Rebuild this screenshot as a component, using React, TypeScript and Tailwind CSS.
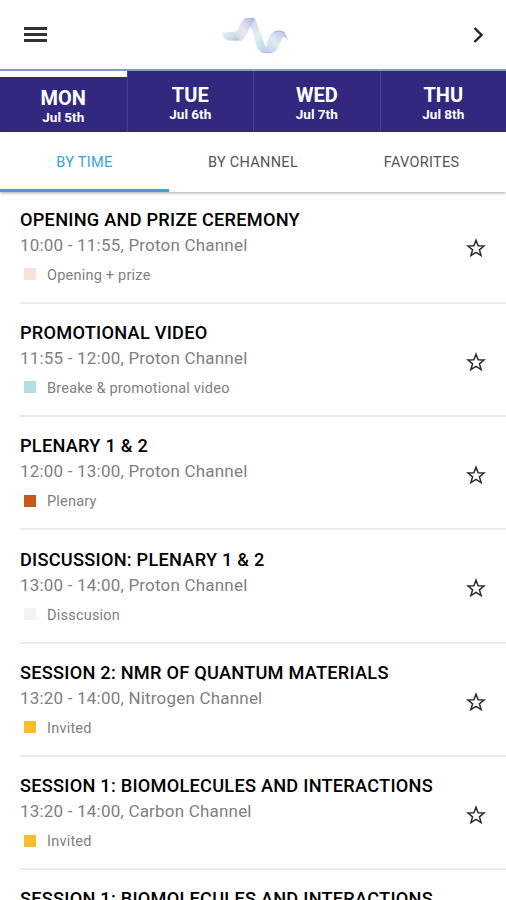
import { useState } from "react";

type Session = {
  id: number;
  title: string;
  time: string;
  channel: string;
  category: string;
  color: string;
};

const days = [
  { name: "MON", date: "Jul 5th" },
  { name: "TUE", date: "Jul 6th" },
  { name: "WED", date: "Jul 7th" },
  { name: "THU", date: "Jul 8th" },
];

const filters = ["BY TIME", "BY CHANNEL", "FAVORITES"];

const sessions: Session[] = [
  { id: 1, title: "OPENING AND PRIZE CEREMONY", time: "10:00 - 11:55", channel: "Proton Channel", category: "Opening + prize", color: "bg-[#fae1d6]" },
  { id: 2, title: "PROMOTIONAL VIDEO", time: "11:55 - 12:00", channel: "Proton Channel", category: "Breake & promotional video", color: "bg-[#b3dce6]" },
  { id: 3, title: "PLENARY 1 & 2", time: "12:00 - 13:00", channel: "Proton Channel", category: "Plenary", color: "bg-[#c65a1e]" },
  { id: 4, title: "DISCUSSION: PLENARY 1 & 2", time: "13:00 - 14:00", channel: "Proton Channel", category: "Disscusion", color: "bg-[#f3f3f3]" },
  { id: 5, title: "SESSION 2: NMR OF QUANTUM MATERIALS", time: "13:20 - 14:00", channel: "Nitrogen Channel", category: "Invited", color: "bg-[#fbbd2b]" },
  { id: 6, title: "SESSION 1: BIOMOLECULES AND INTERACTIONS", time: "13:20 - 14:00", channel: "Carbon Channel", category: "Invited", color: "bg-[#fbbd2b]" },
  { id: 7, title: "SESSION 1: BIOMOLECULES AND INTERACTIONS", time: "13:40 - 14:00", channel: "Carbon Channel", category: "Invited", color: "bg-[#fbbd2b]" },
];

function WaveLogo() {
  return (
    <svg className="opacity-90" width="68" height="40" viewBox="0 0 68 40" fill="none">
      <defs>
        <linearGradient id="tail" x1="0" y1="0" x2="1" y2="0.6">
          <stop offset="0" stopColor="#eaf5f8" />
          <stop offset="0.5" stopColor="#cfe3ec" />
          <stop offset="1" stopColor="#a9c3dc" />
        </linearGradient>
        <linearGradient id="rise" x1="0" y1="1" x2="0.9" y2="0">
          <stop offset="0" stopColor="#c3d8e8" />
          <stop offset="0.45" stopColor="#ebe5f2" />
          <stop offset="1" stopColor="#a9b4da" />
        </linearGradient>
        <linearGradient id="fall" x1="0" y1="0" x2="0.7" y2="1">
          <stop offset="0" stopColor="#c9cde8" />
          <stop offset="0.5" stopColor="#dceff6" />
          <stop offset="1" stopColor="#b5cce6" />
        </linearGradient>
        <linearGradient id="end" x1="0" y1="1" x2="0.8" y2="0">
          <stop offset="0" stopColor="#b5c9e4" />
          <stop offset="0.5" stopColor="#dcebf5" />
          <stop offset="1" stopColor="#b4c0e1" />
        </linearGradient>
      </defs>
      <path d="M1 17C6 17.5 12 17 17 16L21 25C18 26 12 26 8 25.5C4 25 1 21 1 17Z" fill="url(#tail)" />
      <path d="M30 4C32 1.5 34 3 35 6C37 11 39 16 41 22C43 29 46 36 51 37.5C46 38.5 42 38 39 36C33 30 34 18 29 11Z" fill="url(#fall)" />
      <path d="M15 18C19 12 19 3 28 3C31 2.8 33 3 34 4.5C29 9 27 21 20 26C17 25 15 21 15 18Z" fill="url(#rise)" />
      <path d="M45 36C46 28 47 17 55 16C63 14.5 66 19 67 26C65 23 64 22 62 22C59 27 57 36 52 37.5C48 38.5 46 38 45 36Z" fill="url(#end)" />
      <path d="M24 4.2Q29 2.5 33 3.8M40 36.5Q45 38.5 51 37.5M53 17Q59 14.8 64 17.5" stroke="#9cb0d8" strokeWidth="0.9" />
    </svg>
  );
}

function SessionRow({ session }: { session: Session }) {
  return (
    <li className="ml-5 flex h-[113.3px] shrink-0 items-start justify-between border-b-2 border-[#ebebeb] pt-[17.2px]">
      <div>
        <h2 className="text-[18.2px] leading-6 font-medium tracking-[0.24px] whitespace-nowrap text-black">{session.title}</h2>
        <p className="text-[17px] leading-[26px] tracking-[0.2px] text-[#808080]">
          {session.time}, {session.channel}
        </p>
        <div className="mt-1.5 flex items-center gap-[11px] pl-1">
          <span className={`mb-[2px] size-3 ${session.color}`} />
          <span className="text-[14.5px] leading-[23px] tracking-[0.22px] text-[#808080]">{session.category}</span>
        </div>
      </div>
      <button className="mt-[30.8px] mr-5" aria-label="Add to favorites">
        <svg className="block" width="20" height="20" viewBox="0 0 20 20" fill="none" stroke="#2b2b2b" strokeWidth="1.5">
          <path d="M10 2.2L12.1 7.8L18 8L13.4 11.8L15.1 17.6L10 14.3L4.9 17.6L6.6 11.8L2 8L7.9 7.8Z" />
        </svg>
      </button>
    </li>
  );
}

export default function App() {
  const [day, setDay] = useState(0);
  const [filter, setFilter] = useState(0);

  return (
    <main className="flex h-[900px] w-full flex-col overflow-hidden bg-white font-['Roboto',sans-serif]">
      <header className="flex h-[71px] shrink-0 items-center justify-between border-b-2 border-[#7d9dcc] pr-[21px] pl-6">
        <button aria-label="Menu" className="flex w-[23px] flex-col gap-[3.5px]">
          <span className="h-[2.8px] bg-[#333]" />
          <span className="h-[2.8px] bg-[#333]" />
          <span className="h-[2.8px] bg-[#333]" />
        </button>
        <WaveLogo />
        <button aria-label="Next" className="flex w-[23px] justify-end">
          <svg width="14" height="18" viewBox="0 0 14 18" fill="none" stroke="#222" strokeWidth="2.4">
            <path d="M3.5 2L10.5 9L3.5 16" />
          </svg>
        </button>
      </header>

      <nav className="grid h-[61px] shrink-0 grid-cols-4 bg-[#32287f]">
        {days.map((item, index) => (
          <button
            key={item.name}
            onClick={() => setDay(index)}
            className={`flex flex-col items-center justify-center border-white pt-[3px] text-white ${
              index === day ? "border-t-[6px]" : ""
            } ${index > 0 ? "border-l border-l-[#483f93]" : ""}`}
          >
            <span className="text-[20px] leading-[22px] font-bold">{item.name}</span>
            <span className="text-[13.5px] leading-[17px] font-bold">{item.date}</span>
          </button>
        ))}
      </nav>

      <nav className="z-10 grid h-[59.5px] shrink-0 grid-cols-3 bg-white shadow-[0_1px_3px_rgba(0,0,0,0.35)]">
        {filters.map((label, index) => (
          <button
            key={label}
            onClick={() => setFilter(index)}
            className={`border-b-[3px] pt-[6px] text-[14.5px] tracking-[0.3px] ${
              index === filter ? "border-[#3fa2d5] text-[#35a3dc]" : "border-transparent text-[#555]"
            }`}
          >
            {label}
          </button>
        ))}
      </nav>

      <ul className="-mt-px flex flex-col">
        {sessions.map((session) => (
          <SessionRow key={session.id} session={session} />
        ))}
      </ul>
    </main>
  );
}
